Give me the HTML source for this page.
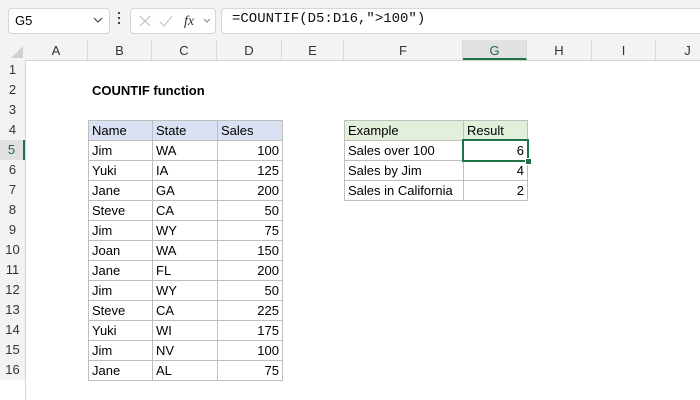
<!DOCTYPE html><html><head><style>
body{margin:0;width:700px;height:400px;overflow:hidden;background:#fff;font-family:"Liberation Sans",Calibri,sans-serif;position:relative}
.a{position:absolute}
.top{left:0;top:0;width:700px;height:40px;background:#f3f3f3}
.box{background:#fff;border:1px solid #d6d6d6;border-radius:4px}
.hd{background:#f3f3f3;top:40px;height:20px;border-bottom:1px solid #d4d4d4}
.ch{top:40px;height:20px;line-height:21px;text-align:center;font-size:13px;color:#333;border-right:1px solid #d9d9d9;box-sizing:border-box}
.rh{left:0;width:25px;text-align:center;font-size:13px;color:#333;height:20px;line-height:20px;box-sizing:border-box;background:#f3f3f3}
.c{font-size:13px;height:21px;line-height:19px;box-sizing:border-box;padding:0 3px;border:1px solid #bfbfbf;color:#000;white-space:nowrap}
.r{text-align:right}
</style></head><body>
<div class="a top"></div>
<div class="a box" style="left:8px;top:8px;width:100px;height:24px"></div>
<div class="a" style="left:15px;top:13px;font-size:13px">G5</div>
<svg class="a" style="left:92px;top:16px" width="12" height="8"><path d="M2 2l4 4 4-4" stroke="#444" fill="none" stroke-width="1.2"/></svg>
<div class="a" style="left:118px;top:12px;width:2px;height:2px;background:#444;box-shadow:0 5px #444,0 10px #444"></div>
<div class="a box" style="left:130px;top:8px;width:84px;height:24px"></div>
<svg class="a" style="left:138px;top:14px" width="80" height="14"><path d="M2 2l10 10M12 2L2 12" stroke="#bbb" fill="none"/><path d="M22 8l4 4 8-10" stroke="#bbb" fill="none"/><text x="46" y="11" font-family="Liberation Serif" font-style="italic" font-size="14" fill="#333">fx</text><path d="M66 5l3 3 3-3" stroke="#888" fill="none"/></svg>
<div class="a box" style="left:221px;top:8px;width:490px;height:24px"></div>
<div class="a" style="left:232px;top:11px;font-family:'Liberation Mono',monospace;font-size:14px;color:#111">=COUNTIF(D5:D16,"&gt;100")</div>
<div class="a hd" style="left:0;width:700px"></div>
<svg class="a" style="left:10px;top:45px" width="14" height="14"><path d="M13 1L13 13L1 13Z" fill="#d0d0d0"/></svg>
<div class="a ch" style="left:25px;width:63px">A</div>
<div class="a ch" style="left:88px;width:64px">B</div>
<div class="a ch" style="left:152px;width:65px">C</div>
<div class="a ch" style="left:217px;width:65px">D</div>
<div class="a ch" style="left:282px;width:62px">E</div>
<div class="a ch" style="left:344px;width:119px">F</div>
<div class="a ch" style="left:463px;width:64px;background:#e1e1e1;color:#1e6b3e;border-bottom:2px solid #217346">G</div>
<div class="a ch" style="left:527px;width:65px">H</div>
<div class="a ch" style="left:592px;width:64px">I</div>
<div class="a ch" style="left:656px;width:64px">J</div>
<div class="a" style="left:25px;top:60px;width:1px;height:340px;background:#d4d4d4"></div>
<div id="rows"></div>
<div class="a" style="left:92px;top:83px;font-size:13px;font-weight:bold">COUNTIF function</div>
<script>
var h='';for(var i=1;i<=16;i++){var t=60+(i-1)*20;h+='<div class="a rh" style="top:'+t+'px;'+(i==5?'background:#e1e1e1;color:#1e6b3e;border-right:2px solid #217346':'')+'">'+i+'</div>';}
var d=[["Name","State","Sales"],["Jim","WA",100],["Yuki","IA",125],["Jane","GA",200],["Steve","CA",50],["Jim","WY",75],["Joan","WA",150],["Jane","FL",200],["Jim","WY",50],["Steve","CA",225],["Yuki","WI",175],["Jim","NV",100],["Jane","AL",75]];
var xs=[88,152,217],ws=[65,66,66];
d.forEach(function(r,j){var t=120+j*20;r.forEach(function(v,k){h+='<div class="a c'+(k==2&&j>0?' r':'')+'" style="left:'+xs[k]+'px;top:'+t+'px;width:'+ws[k]+'px;'+(j==0?'background:#d9e1f2':'')+'">'+v+'</div>';});});
var e=[["Example","Result"],["Sales over 100",6],["Sales by Jim",4],["Sales in California",2]];
e.forEach(function(r,j){var t=120+j*20;h+='<div class="a c" style="left:344px;top:'+t+'px;width:120px;'+(j==0?'background:#e2efda':'')+'">'+r[0]+'</div><div class="a c'+(j>0?' r':'')+'" style="left:463px;top:'+t+'px;width:65px;'+(j==0?'background:#e2efda':'')+'">'+r[1]+'</div>';});
document.getElementById('rows').innerHTML=h;
</script>
<div class="a" style="left:462px;top:139px;width:67px;height:23px;border:2px solid #217346;box-sizing:border-box"></div>
<div class="a" style="left:525px;top:158px;width:5px;height:5px;background:#217346;border:1px solid #fff"></div>
</body></html>
